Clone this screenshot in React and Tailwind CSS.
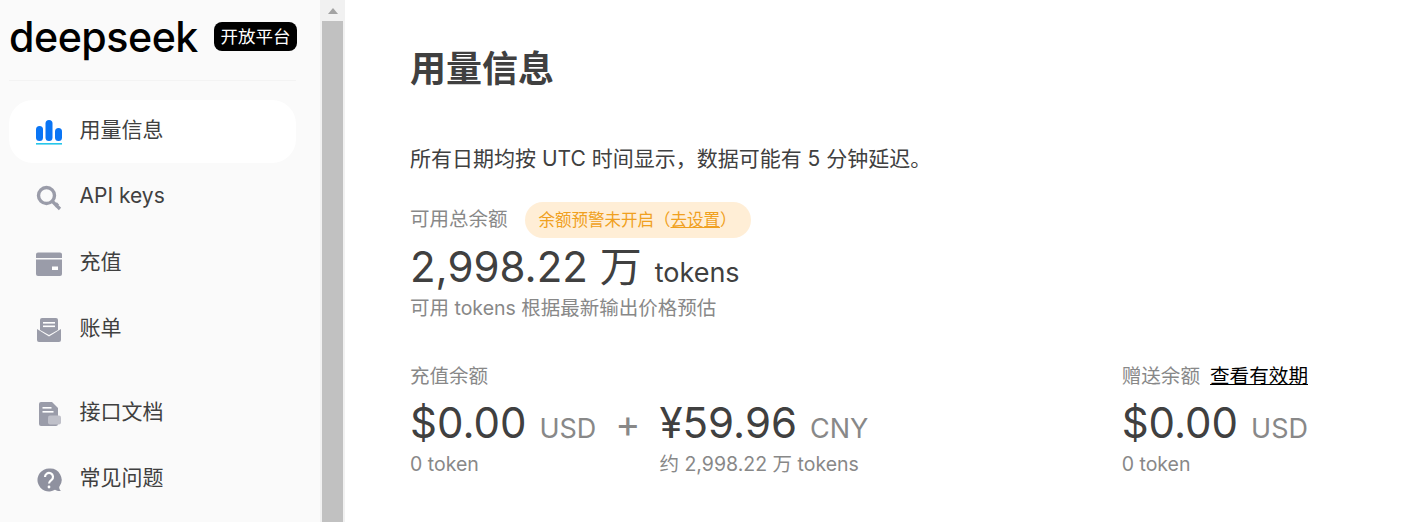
import React from 'react';

const fontStack = { fontFamily: 'Inter, "Noto Sans CJK SC", sans-serif' };

const UsageIcon = () => (
    <svg width="28" height="26" viewBox="0 0 28 26">
        <rect x="1" y="7" width="7" height="15" rx="3.5" fill="#0a75f5" />
        <rect x="10.5" y="1" width="7" height="21" rx="3.5" fill="#0a75f5" />
        <rect x="20" y="9" width="7" height="13" rx="3.5" fill="#0a75f5" />
        <rect x="1" y="24" width="26" height="1.6" fill="#26c6ea" />
    </svg>
);

const KeyIcon = () => (
    <svg width="28" height="26" viewBox="0 0 28 26" fill="none" stroke="#9a9ca9">
        <circle cx="11.5" cy="10.5" r="8" strokeWidth="3.4" />
        <path d="M17.5 16.5 L25 24 M20 21.5 L23 18.5" strokeWidth="3.2" />
    </svg>
);

const CardIcon = () => (
    <svg width="28" height="26" viewBox="0 0 28 26">
        <path d="M1 3.5a2 2 0 0 1 2-2h22a2 2 0 0 1 2 2v3.5H1z" fill="#9a9ca9" />
        <path d="M1 8.5h26V23a2 2 0 0 1-2 2H3a2 2 0 0 1-2-2z" fill="#9a9ca9" />
        <rect x="17" y="15.5" width="6" height="3.5" fill="#fff" />
    </svg>
);

const MailIcon = () => (
    <svg width="28" height="26" viewBox="0 0 28 26">
        <path d="M5 3a2 2 0 0 1 2-2h14a2 2 0 0 1 2 2v10l-9 5-9-5z" fill="#9a9ca9" />
        <rect x="8" y="5" width="12" height="1.6" fill="#fff" />
        <rect x="8" y="8.5" width="12" height="1.6" fill="#fff" />
        <path d="M2 12l12 7.5L26 12v11a2 2 0 0 1-2 2H4a2 2 0 0 1-2-2z" fill="#9a9ca9" />
    </svg>
);

const DocIcon = () => (
    <svg width="28" height="26" viewBox="0 0 28 26">
        <path d="M4 3a2 2 0 0 1 2-2h11l6 6v16a2 2 0 0 1-2 2H6a2 2 0 0 1-2-2z" fill="#9a9ca9" />
        <rect x="7.5" y="6" width="9" height="1.6" fill="#fff" />
        <rect x="7.5" y="10" width="11" height="1.6" fill="#fff" />
        <rect x="13" y="14.5" width="13" height="9" rx="2" fill="#bfc0c9" />
    </svg>
);

const HelpIcon = () => (
    <svg width="28" height="26" viewBox="0 0 28 26">
        <path d="M14 1.5a11.5 11.5 0 1 0 6 21.3c1.5 1 3.5 1.4 6 1.2-1.3-1-1.9-2.4-1.8-4A11.5 11.5 0 0 0 14 1.5z" fill="#8f919f" />
        <path d="M10 10a4 4 0 1 1 6.5 3c-1.6 1.2-2.5 1.8-2.5 3.5" fill="none" stroke="#fff" strokeWidth="2.2" />
        <circle cx="14" cy="20" r="1.4" fill="#fff" />
    </svg>
);

const NavItem = ({ icon, label, active }) => (
    <div className={`flex h-[63px] items-center rounded-[24px] pl-[26px] ${active ? 'bg-white' : ''}`}>
        <span className="mr-[17px] flex w-[28px] items-center justify-center">{icon}</span>
        <span className="-ml-[0.5px] pb-[4px] text-[21px] leading-none text-[#404040]">{label}</span>
    </div>
);

const Amount = ({ value, unit, sub }) => (
    <div>
        <div className="flex items-baseline">
            <span className="text-[42px] leading-[58px] text-[#404040]">{value}</span>
            <span className="ml-[13px] text-[27px] text-[#888888]">{unit}</span>
        </div>
        <div className="-mt-[1px] text-[19.5px] leading-[26px] text-[#888888]">{sub}</div>
    </div>
);

const App = () => {
    return (
        <div className="flex h-[522px] w-[1416px] overflow-hidden bg-white" style={fontStack}>
            <aside className="w-[320px] shrink-0 bg-[#fafafa] pl-[9px] pr-[24px]">
                <div className="flex h-[81px] items-center justify-between border-b border-[#f3f3f3]">
                    <span className="-mt-[7px] w-[188px] origin-left scale-x-[0.98] text-[42px] leading-none font-medium tracking-[-0.5px] whitespace-nowrap text-black">deepseek</span>
                    <span className="-mt-[7px] -mr-[1px] rounded-[8px] bg-black px-[6.5px] text-[17.5px] leading-[29px] whitespace-nowrap text-white">开放平台</span>
                </div>
                <nav className="mt-[19px] flex flex-col gap-[3px]">
                    <NavItem icon={<UsageIcon />} label="用量信息" active />
                    <NavItem icon={<KeyIcon />} label="API keys" />
                    <NavItem icon={<CardIcon />} label="充值" />
                    <NavItem icon={<MailIcon />} label="账单" />
                    <div className="h-[15px]" />
                    <NavItem icon={<DocIcon />} label="接口文档" />
                    <NavItem icon={<HelpIcon />} label="常见问题" />
                </nav>
            </aside>

            <div className="flex w-[25px] shrink-0 flex-col bg-[#f1f1f1]">
                <div className="flex h-[21px] items-center justify-center">
                    <span className="h-0 w-0 border-x-[5px] border-b-[6px] border-x-transparent border-b-[#a3a3a3]" />
                </div>
                <div className="mx-[2px] flex-1 bg-[#c1c1c1]" />
            </div>

            <main className="flex-1 pl-[65px] pr-[108px] text-[#404040]">
                <h1 className="mt-[44px] text-[36px] leading-[50px] font-bold">用量信息</h1>
                <p className="mt-[51px] text-[21px] leading-[28px]">所有日期均按 UTC 时间显示，数据可能有 5 分钟延迟。</p>

                <div className="mt-[29px] flex items-center">
                    <span className="text-[19.5px] text-[#888888]">可用总余额</span>
                    <span className="ml-[17px] flex h-[36px] items-center rounded-[18px] bg-[#ffeed6] px-[14px] text-[16.5px] text-[#f0a020]">
                        余额预警未开启（<span className="underline">去设置</span>）
                    </span>
                </div>
                <div className="flex items-baseline leading-[58px]">
                    <span className="text-[42px]">2,998.22 万</span>
                    <span className="ml-[13px] text-[27px]">tokens</span>
                </div>
                <div className="-mt-[6px] text-[19.5px] leading-[24px] text-[#888888]">可用 tokens 根据最新输出价格预估</div>

                <div className="mt-[42px] flex">
                    <div className="flex-1">
                        <div className="text-[19.5px] leading-[28px] text-[#888888]">充值余额</div>
                        <div className="mt-[4px] flex">
                            <Amount value="$0.00" unit="USD" sub="0 token" />
                            <span className="mx-[19px] mt-[7px] text-[38px] leading-[44px] text-[#888888]">+</span>
                            <Amount value="¥59.96" unit="CNY" sub="约 2,998.22 万 tokens" />
                        </div>
                    </div>
                    <div>
                        <div className="text-[19.6px] leading-[28px] whitespace-nowrap text-[#888888]">
                            赠送余额<span className="ml-[10px] text-black underline">查看有效期</span>
                        </div>
                        <div className="mt-[4px]">
                            <Amount value="$0.00" unit="USD" sub="0 token" />
                        </div>
                    </div>
                </div>
            </main>
        </div>
    );
};

export default App;
